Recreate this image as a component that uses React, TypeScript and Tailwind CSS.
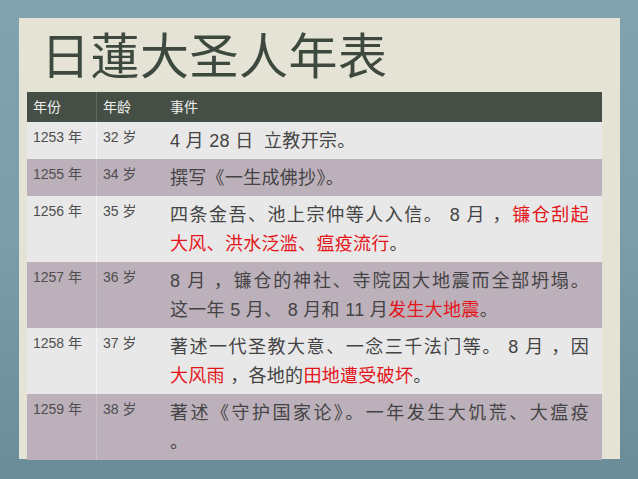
type Seg = { t: string; red?: boolean };
type Line = { segs: Seg[]; full?: boolean };
type Row = { year: string; age: string; lines: Line[] };

const rows: Row[] = [
  {
    year: '1253 年',
    age: '32 岁',
    lines: [{ segs: [{ t: '4 月 28 日\u00a0\u00a0立教开宗。' }] }],
  },
  {
    year: '1255 年',
    age: '34 岁',
    lines: [{ segs: [{ t: '撰写《一生成佛抄》。' }] }],
  },
  {
    year: '1256 年',
    age: '35 岁',
    lines: [
      { full: true, segs: [{ t: '四条金吾、池上宗仲等人入信。 8 月 ，' }, { t: '镰仓刮起', red: true }] },
      { segs: [{ t: '大风、洪水泛滥、瘟疫流行', red: true }, { t: '。' }] },
    ],
  },
  {
    year: '1257 年',
    age: '36 岁',
    lines: [
      { full: true, segs: [{ t: '8 月 ，镰仓的神社、寺院因大地震而全部坍塌。' }] },
      { segs: [{ t: '这一年 5 月、 8 月和 11 月' }, { t: '发生大地震', red: true }, { t: '。' }] },
    ],
  },
  {
    year: '1258 年',
    age: '37 岁',
    lines: [
      { full: true, segs: [{ t: '著述一代圣教大意、一念三千法门等。 8 月 ，因' }] },
      {
        segs: [
          { t: '大风雨', red: true },
          { t: ' ，各地的' },
          { t: '田地遭受破坏', red: true },
          { t: '。' },
        ],
      },
    ],
  },
  {
    year: '1259 年',
    age: '38 岁',
    lines: [
      { full: true, segs: [{ t: '著述《守护国家论》。一年发生大饥荒、大瘟疫' }] },
      { segs: [{ t: '。' }] },
    ],
  },
];

const font = 'font-["Liberation_Sans","Noto_Sans_CJK_SC",sans-serif]';

export default function App() {
  return (
    <div className="w-[638px] h-[479px] overflow-hidden bg-linear-to-b from-[#82a3ae] via-[#7b9ca8] to-[#6a8c98] pt-[18px] pl-[19px]">
      <div className="w-[601px] h-[441px] bg-[#e4e3d5] pt-[11px] pl-[8px]">
        <h1 className='pl-[14px] text-[49px] leading-[48px] tracking-[0.5px] text-[#3d493f] font-["Noto_Sans_CJK_SC",serif] font-normal'>
          日蓮大圣人年表
        </h1>

        <div className={`mt-[15px] w-[575px] ${font}`}>
          <div className="flex h-[30px] items-center bg-[#454f45] text-[14px] text-[#eeeeee]">
            <div className="w-[70px] pl-[6px] h-full flex items-center border-r border-white/15">年份</div>
            <div className="w-[67px] pl-[6px]">年龄</div>
            <div className="flex-1 pl-[6px]">事件</div>
          </div>

          {rows.map((row, i) => (
            <div
              key={row.year}
              className={`flex ${i % 2 === 0 ? 'bg-[#e8e8e8]' : 'bg-[#bcb0bb]'}`}
            >
              <div
                className={`w-[70px] pl-[6px] pt-[5px] text-[14px] leading-[20px] text-[#4e4e4e] border-r ${
                  i % 2 === 0 ? 'border-white/60' : 'border-white/20'
                }`}
              >
                {row.year}
              </div>
              <div className="w-[67px] pl-[6px] pt-[5px] text-[14px] leading-[20px] text-[#4e4e4e]">
                {row.age}
              </div>
              <div className="flex-1 pl-[6px] pt-[5px] pb-[3px] text-[18px] leading-[29px] tracking-[0.3px] text-[#444444]">
                {row.lines.map((line, j) => (
                  <div
                    key={j}
                    className={
                      line.full
                        ? 'w-[419px] whitespace-nowrap text-justify [text-align-last:justify]'
                        : 'whitespace-nowrap'
                    }
                  >
                    {line.segs.map((s, k) => (
                      <span key={k} className={s.red ? 'text-[#e3141a]' : undefined}>
                        {s.t}
                      </span>
                    ))}
                  </div>
                ))}
              </div>
            </div>
          ))}
        </div>
      </div>
    </div>
  );
}
